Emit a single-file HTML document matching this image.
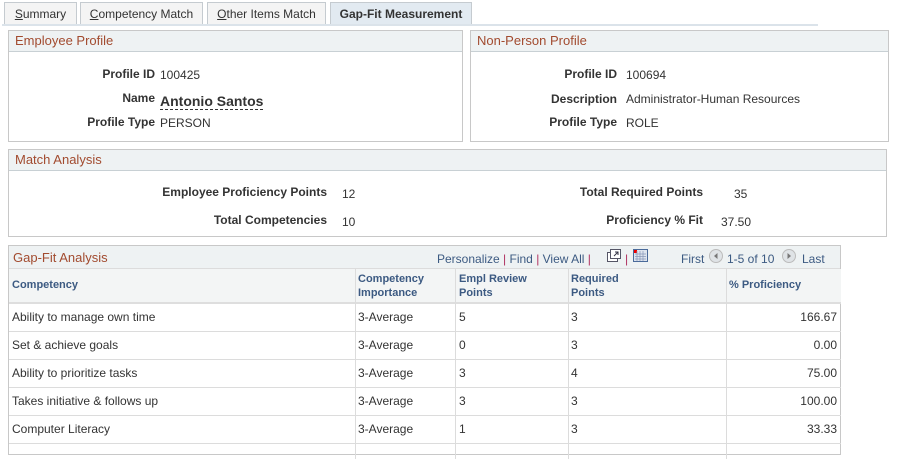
<!DOCTYPE html>
<html><head><meta charset="utf-8"><style>
*{margin:0;padding:0;box-sizing:border-box}
body{width:898px;height:448px;background:#fff;font-family:"Liberation Sans",Arial,sans-serif;font-size:12px;color:#333;position:relative;overflow:hidden}
.a{position:absolute;white-space:nowrap}
.tab{position:absolute;top:2px;height:23px;border:1px solid #c5cbd0;border-bottom:none;background:#f4f4f4;color:#333;font-size:12px;line-height:22px;text-align:center}
.tab u{text-decoration:underline}
.box{position:absolute;border:1px solid #c8c8c8;background:#fff}
.hd{height:21px;background:#eef2f3;border-bottom:1px solid #c8d0d4;color:#a24b2f;font-size:13px;line-height:20px;padding-left:6px}
.lb{position:absolute;font-weight:bold;text-align:right;white-space:nowrap}
.v{position:absolute;white-space:nowrap}
.gh{color:#3c5a82;font-weight:bold;font-size:11px}
.hl{position:absolute;left:0;width:832px;height:1px;background:#dcdcdc}
.vl{position:absolute;width:1px;background:#dcdcdc}
</style></head><body>
<div class="tab" style="left:4px;width:73px"><u>S</u>ummary</div>
<div class="tab" style="left:80px;width:123px"><u>C</u>ompetency Match</div>
<div class="tab" style="left:207px;width:119px"><u>O</u>ther Items Match</div>
<div class="tab" style="left:330px;width:142px;background:#e2eaf1;font-weight:bold;height:24px">Gap-Fit Measurement</div>
<div class="a" style="left:2px;top:24px;width:816px;height:2px;background:#dbe3ea"></div>

<div class="box" style="left:8px;top:30px;width:455px;height:112px"><div class="hd">Employee Profile</div>
<div class="lb" style="right:307px;top:36px">Profile ID</div><div class="v" style="left:151px;top:37px">100425</div>
<div class="lb" style="right:307px;top:60px">Name</div><div class="v" style="left:151px;top:62px;font-size:14px;font-weight:bold;border-bottom:1px dashed #333;line-height:16px">Antonio Santos</div>
<div class="lb" style="right:307px;top:84px">Profile Type</div><div class="v" style="left:151px;top:85px">PERSON</div>
</div>

<div class="box" style="left:470px;top:30px;width:419px;height:112px"><div class="hd">Non-Person Profile</div>
<div class="lb" style="right:271px;top:36px">Profile ID</div><div class="v" style="left:155px;top:37px">100694</div>
<div class="lb" style="right:271px;top:61px">Description</div><div class="v" style="left:155px;top:61px">Administrator-Human Resources</div>
<div class="lb" style="right:271px;top:84px">Profile Type</div><div class="v" style="left:155px;top:85px">ROLE</div>
</div>

<div class="box" style="left:8px;top:149px;width:879px;height:88px"><div class="hd">Match Analysis</div>
<div class="lb" style="right:559px;top:35px">Employee Proficiency Points</div><div class="v" style="left:333px;top:37px">12</div>
<div class="lb" style="right:559px;top:63px">Total Competencies</div><div class="v" style="left:333px;top:65px">10</div>
<div class="lb" style="right:183px;top:35px">Total Required Points</div><div class="v" style="left:725px;top:37px">35</div>
<div class="lb" style="right:183px;top:63px">Proficiency % Fit</div><div class="v" style="left:712px;top:65px">37.50</div>
</div>

<div class="box" style="left:8px;top:245px;width:833px;height:210px">
<div style="height:23px;background:#eef2f3;border-bottom:1px solid #dcdcdc;position:relative">
<span class="a" style="left:4px;top:4px;color:#a24b2f;font-size:13px">Gap-Fit Analysis</span>
<span class="a" style="left:428px;top:6px;color:#3c5a82">Personalize <span style="color:#b03060">|</span> Find <span style="color:#b03060">|</span> View All <span style="color:#b03060">|</span></span>
<svg class="a" style="left:597px;top:3px" width="16" height="14"><rect x="1.5" y="3.5" width="10" height="9" fill="#fff" stroke="#556"/><rect x="4.5" y="0.5" width="10" height="9" fill="#fff" stroke="#556"/><path d="M8 7l4-4M9 3h3v3" stroke="#334" fill="none"/></svg>
<span class="a" style="left:616px;top:6px;color:#b03060">|</span>
<svg class="a" style="left:624px;top:3px" width="15" height="13"><rect x="0.5" y="0.5" width="14" height="12" fill="#dde4ee" stroke="#4a6a9a"/><rect x="1" y="1" width="3" height="3" fill="#e00"/><path d="M2 5h11M2 7.5h11M2 10h11M4 2v10M7 2v10M10 2v10" stroke="#8898b8" stroke-width=".7"/></svg>
<span class="a" style="left:672px;top:6px;color:#3c5a82">First</span>
<svg class="a" style="left:700px;top:3px" width="14" height="14"><circle cx="7" cy="7" r="6.5" fill="#dfe3e6" stroke="#bbb"/><path d="M8.5 4v6L5 7z" fill="#777"/></svg>
<span class="a" style="left:718px;top:6px;color:#3c5a82">1-5 of 10</span>
<svg class="a" style="left:773px;top:3px" width="14" height="14"><circle cx="7" cy="7" r="6.5" fill="#dfe3e6" stroke="#bbb"/><path d="M5.5 4v6L9 7z" fill="#777"/></svg>
<span class="a" style="left:793px;top:6px;color:#3c5a82">Last</span>
</div>
<div class="a" style="left:0;top:23px;width:832px;height:33px;background:#f3f5f5"></div>
<div class="hl" style="top:56px;height:2px;background:#dedede"></div>
<div class="hl" style="top:85px"></div><div class="hl" style="top:113px"></div><div class="hl" style="top:141px"></div><div class="hl" style="top:169px"></div><div class="hl" style="top:197px"></div>
<div class="vl" style="left:346px;top:23px;height:190px"></div>
<div class="vl" style="left:446px;top:23px;height:190px"></div>
<div class="vl" style="left:559px;top:23px;height:190px"></div>
<div class="vl" style="left:717px;top:23px;height:190px"></div>
<span class="a gh" style="left:3px;top:33px">Competency</span>
<span class="a gh" style="left:349px;top:26px;line-height:14px">Competency<br>Importance</span>
<span class="a gh" style="left:450px;top:26px;line-height:14px">Empl Review<br>Points</span>
<span class="a gh" style="left:562px;top:26px;line-height:14px">Required<br>Points</span>
<span class="a gh" style="left:720px;top:33px">% Proficiency</span>

<span class="a" style="left:3px;top:64px">Ability to manage own time</span><span class="a" style="left:349px;top:64px">3-Average</span><span class="a" style="left:450px;top:64px">5</span><span class="a" style="left:562px;top:64px">3</span><span class="a" style="right:3px;top:64px">166.67</span>
<span class="a" style="left:3px;top:92px">Set &amp; achieve goals</span><span class="a" style="left:349px;top:92px">3-Average</span><span class="a" style="left:450px;top:92px">0</span><span class="a" style="left:562px;top:92px">3</span><span class="a" style="right:3px;top:92px">0.00</span>
<span class="a" style="left:3px;top:120px">Ability to prioritize tasks</span><span class="a" style="left:349px;top:120px">3-Average</span><span class="a" style="left:450px;top:120px">3</span><span class="a" style="left:562px;top:120px">4</span><span class="a" style="right:3px;top:120px">75.00</span>
<span class="a" style="left:3px;top:148px">Takes initiative &amp; follows up</span><span class="a" style="left:349px;top:148px">3-Average</span><span class="a" style="left:450px;top:148px">3</span><span class="a" style="left:562px;top:148px">3</span><span class="a" style="right:3px;top:148px">100.00</span>
<span class="a" style="left:3px;top:176px">Computer Literacy</span><span class="a" style="left:349px;top:176px">3-Average</span><span class="a" style="left:450px;top:176px">1</span><span class="a" style="left:562px;top:176px">3</span><span class="a" style="right:3px;top:176px">33.33</span>
</div>
</body></html>
